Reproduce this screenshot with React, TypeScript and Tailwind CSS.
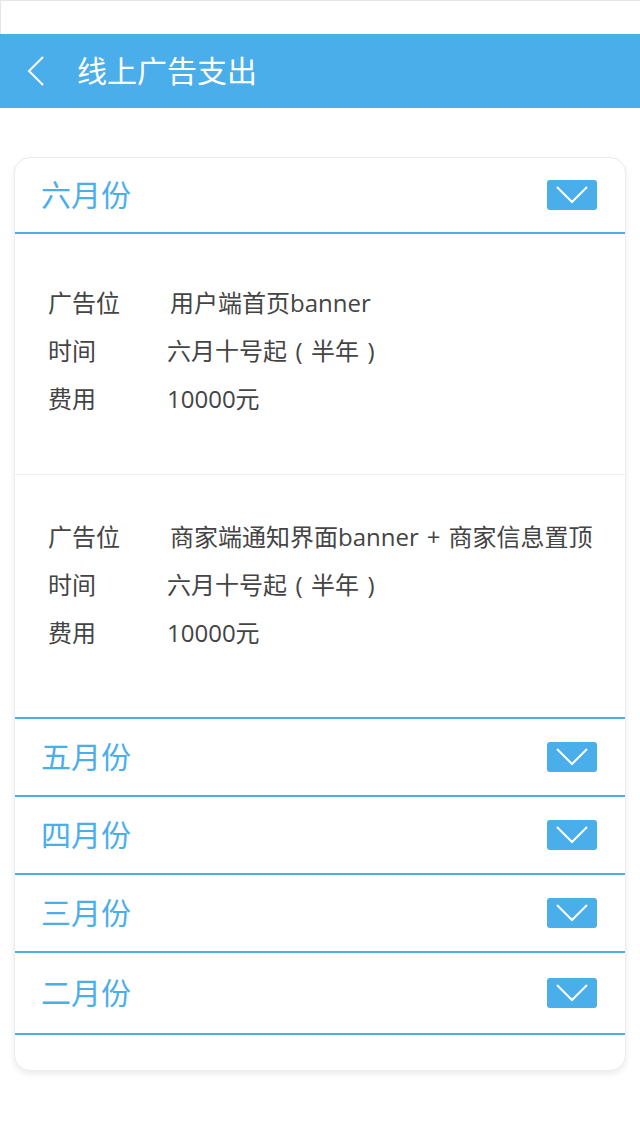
import React from 'react'

type Ad = { slot: React.ReactNode; cost: string }

const JUNE: Ad[] = [
  { slot: '用户端首页banner', cost: '10000元' },
  {
    slot: (
      <>
        商家端通知界面banner<span className="mx-[8px]">+</span>商家信息置顶
      </>
    ),
    cost: '10000元',
  },
]

const FONT = { fontFamily: '"Open Sans", "Noto Sans CJK SC", sans-serif' }

function ToggleButton() {
  return (
    <div className="w-[50px] h-[30px] rounded-[3px] bg-[#4aaeea] flex items-center justify-center">
      <svg width="50" height="30" viewBox="0 0 50 30" fill="none">
        <polyline points="10,7 25,22 40,7" stroke="white" strokeWidth="2" />
      </svg>
    </div>
  )
}

function MonthHeader({ label, h }: { label: string; h: string }) {
  return (
    <div className={`flex items-center justify-between pl-[26px] pr-[28px] ${h}`}>
      <span className="text-[30px] text-[#4aaeea] leading-none">{label}</span>
      <ToggleButton />
    </div>
  )
}

// full-width parens, glyph centred in its cell like the original font
function Time() {
  return (
    <span className="whitespace-nowrap">
      六月十号起<span className="inline-block w-[24px] text-center">(</span>半年
      <span className="inline-block w-[24px] text-center">)</span>
    </span>
  )
}

function AdBlock({ ad, pad }: { ad: Ad; pad: string }) {
  return (
    <div className={`pl-[33px] ${pad} text-[24px] text-[#444]`}>
      <div className="flex h-[48px] items-center">
        <span className="w-[119px] shrink-0">广告位</span>
        <span className="whitespace-nowrap ml-[3px]">{ad.slot}</span>
      </div>
      <div className="flex h-[48px] items-center">
        <span className="w-[119px] shrink-0">时间</span>
        <Time />
      </div>
      <div className="flex h-[48px] items-center">
        <span className="w-[119px] shrink-0">费用</span>
        <span>{ad.cost}</span>
      </div>
    </div>
  )
}

export default function App() {
  return (
    <div className="w-[640px] h-[1136px] bg-white" style={FONT}>
      <div className="h-[34px] border-t border-l border-[#e6e6e6] bg-white" />
      <div className="h-[74px] bg-[#4aaeea] flex items-center">
        <svg className="ml-[27px]" width="18" height="30" viewBox="0 0 18 30" fill="none">
          <polyline points="16,1 2,15 16,29" stroke="white" strokeWidth="2" />
        </svg>
        <span className="ml-[32px] text-[30px] text-white leading-none">线上广告支出</span>
      </div>

      <div className="px-[14px] pt-[49px]">
        <div className="rounded-[16px] border border-[#ececec] bg-white shadow-[0_3px_6px_rgba(0,0,0,0.08)] overflow-hidden">
          <MonthHeader label="六月份" h="h-[74px]" />
          <div className="border-t-2 border-[#4aaeea]">
            <AdBlock ad={JUNE[0]} pad="pt-[45px] pb-[51px]" />
            <div className="border-t border-[#eeeeee]">
              <AdBlock ad={JUNE[1]} pad="pt-[38px] pb-[60px]" />
            </div>
          </div>
          <div className="border-t-2 border-[#4aaeea]">
            <MonthHeader label="五月份" h="h-[76px]" />
          </div>
          <div className="border-t-2 border-[#4aaeea]">
            <MonthHeader label="四月份" h="h-[76px]" />
          </div>
          <div className="border-t-2 border-[#4aaeea]">
            <MonthHeader label="三月份" h="h-[76px]" />
          </div>
          <div className="border-t-2 border-[#4aaeea]">
            <MonthHeader label="二月份" h="h-[80px]" />
          </div>
          <div className="border-t-2 border-[#4aaeea] h-[37px]" />
        </div>
      </div>
    </div>
  )
}
